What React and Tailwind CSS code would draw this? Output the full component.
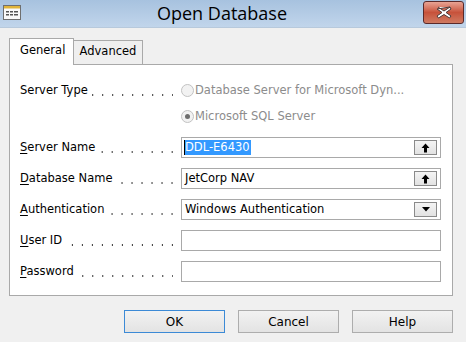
import React from 'react';

// label with dot leaders; dots tile from the right so columns line up across rows
const Label = ({ accel, rest, dots = true }) => (
  <div className="w-[161px] pr-[8px] flex items-end h-full">
    <span className="whitespace-nowrap leading-none pb-[5px]">
      {accel && <span className="underline underline-offset-2">{accel}</span>}
      {rest}
    </span>
    {dots && (
      <span className="flex-1 ml-[4px] h-[2px] mb-[5px] bg-[linear-gradient(to_right,transparent_9px,#333_9px)] bg-[length:10px_2px] bg-repeat-x bg-right" />
    )}
  </div>
);

const UpArrow = () => (
  <svg width="9" height="10" viewBox="0 0 9 10">
    <path d="M4.5 0.5 L8.5 5 L6 5 L6 9.5 L3 9.5 L3 5 L0.5 5 Z" fill="#000" />
  </svg>
);

const DownTri = () => (
  <svg width="8" height="5" viewBox="0 0 8 5">
    <path d="M0 0 L8 0 L4 4.5 Z" fill="#000" />
  </svg>
);

const Field = ({ children, button }) => (
  <div className="w-[260px] h-[21px] border border-[#a9a9a9] bg-white flex items-center pl-[2px] pr-[3px]">
    <div className="flex-1 flex items-center h-full overflow-hidden">{children}</div>
    {button && (
      <div className="w-[23px] h-[15px] border border-[#8a8a8a] bg-gradient-to-b from-[#f4f4f4] to-[#e2e2e2] flex items-center justify-center">
        {button}
      </div>
    )}
  </div>
);

const Radio = ({ checked, text }) => (
  <div className="flex items-center text-[#8c8c8c]">
    <span className="w-[13px] h-[13px] rounded-full border border-[#c2c2c2] bg-[#f2f2f2] flex items-center justify-center">
      {checked && <span className="w-[5px] h-[5px] rounded-full bg-[#6d6d6d]" />}
    </span>
    <span className="ml-[1px] whitespace-nowrap">{text}</span>
  </div>
);

const Row = ({ label, children, className = '' }) => (
  <div className={`flex h-[21px] ${className}`}>
    {label}
    <div className="flex items-center">{children}</div>
  </div>
);

const Btn = ({ children, focused }) => (
  <button
    className={`w-[101px] h-[23px] border ${
      focused ? 'border-[#3c8ad6]' : 'border-[#adadad]'
    } bg-gradient-to-b from-[#f2f2f2] to-[#e3e3e3] text-[12px] text-black`}
  >
    {children}
  </button>
);

const App = () => {
  return (
    <div className="w-[466px] h-[342px] bg-[#f0f0f0] overflow-hidden font-['DejaVu_Sans',sans-serif] text-[11.5px] text-black">
      {/* title bar */}
      <div className="h-[28px] bg-gradient-to-b from-[#a7c2df] to-[#c1d5eb] border-b border-[#b7c9dc] flex items-center relative">
        <svg className="absolute left-[3px] top-[5px]" width="18" height="15" viewBox="0 0 18 15">
          <rect x="0.5" y="0.5" width="17" height="14" fill="#fafafa" stroke="#6f6f6f" />
          <rect x="1" y="1" width="16" height="2.5" fill="#e0b43a" />
          <rect x="3" y="6" width="3" height="1.5" fill="#555" />
          <rect x="7" y="6" width="3" height="1.5" fill="#555" />
          <rect x="11" y="6" width="4" height="1.5" fill="#555" />
          <rect x="3" y="9" width="3" height="1.5" fill="#555" />
          <rect x="7" y="9" width="3" height="1.5" fill="#555" />
          <rect x="11" y="9" width="4" height="1.5" fill="#555" />
        </svg>
        <div className="flex-1 text-center pr-[22px] font-['Open_Sans',sans-serif] text-[18px] leading-none pb-[1px]">
          Open Database
        </div>
        <div className="absolute right-[2px] top-[1px] w-[41px] h-[23px] rounded-[3px] border border-[#5a2a2a] bg-gradient-to-b from-[#e8a394] via-[#c7523b] to-[#cf7a62] flex items-center justify-center">
          <svg width="18" height="15" viewBox="0 0 18 15">
            <path
              d="M3 2 L9 6 L15 2 M15 2 L16 4 L11 7.5 L16 11 L14.5 13 L9 9.5 L3.5 13 L2 11 L7 7.5 L2 4 Z"
              fill="#ffffff"
              stroke="#4a3a3a"
              strokeWidth="1"
              strokeLinejoin="round"
            />
          </svg>
        </div>
      </div>

      <div className="pl-[9px] pr-[13px] pt-[10px]">
        {/* tabs */}
        <div className="flex items-end h-[26px] relative z-10">
          <div className="w-[65px] h-[27px] -mb-[1px] bg-white border border-b-0 border-[#a9a9a9] flex items-center pl-[10px] pb-[3px] text-[11.5px]">
            General
          </div>
          <div className="w-[69px] h-[24px] bg-[#efefef] border border-l-0 border-b-0 border-[#a9a9a9] flex items-center justify-center pb-[1px] text-[11.5px]">
            Advanced
          </div>
        </div>

        {/* panel */}
        <div className="h-[232px] bg-white border border-[#a9a9a9] pl-[10px] pt-[15px] flex flex-col">
          <Row label={<Label rest="Server Type" />}>
            <Radio text="Database Server for Microsoft Dyn..." />
          </Row>
          <Row className="mt-[5px]" label={<Label dots={false} />}>
            <Radio checked text="Microsoft SQL Server" />
          </Row>
          <Row className="mt-[10px]" label={<Label accel="S" rest="erver Name" />}>
            <Field button={<UpArrow />}>
              <span className="w-[1px] h-[15px] bg-black" />
              <span className="bg-[#3399ff] text-white leading-[15px] h-[15px] pr-[1px]">DDL-E6430</span>
            </Field>
          </Row>
          <Row className="mt-[10px]" label={<Label accel="D" rest="atabase Name" />}>
            <Field button={<UpArrow />}>
              <span className="pl-[1px]">JetCorp NAV</span>
            </Field>
          </Row>
          <Row className="mt-[10px]" label={<Label accel="A" rest="uthentication" />}>
            <Field button={<DownTri />}>
              <span className="pl-[1px]">Windows Authentication</span>
            </Field>
          </Row>
          <Row className="mt-[10px]" label={<Label accel="U" rest="ser ID" />}>
            <Field />
          </Row>
          <Row className="mt-[10px]" label={<Label accel="P" rest="assword" />}>
            <Field />
          </Row>
        </div>

        {/* buttons */}
        <div className="flex justify-end gap-[13px] mt-[14px]">
          <Btn focused>OK</Btn>
          <Btn>Cancel</Btn>
          <Btn>Help</Btn>
        </div>
      </div>
    </div>
  );
};

export default App;
